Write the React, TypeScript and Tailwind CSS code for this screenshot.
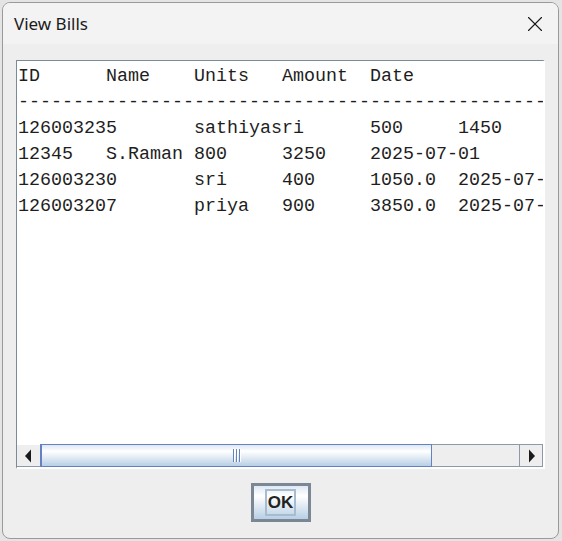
import { X } from "lucide-react";

const LINES = [
  "ID      Name    Units   Amount  Date",
  "-".repeat(90),
  "126003235       sathiyasri      500     1450",
  "12345   S.Raman 800     3250    2025-07-01",
  "126003230       sri     400     1050.0  2025-07-01",
  "126003207       priya   900     3850.0  2025-07-01",
];

const ocean = "bg-[linear-gradient(to_bottom,#dde8f3_0%,#ffffff_30%,#b8cfe5_100%)]";

function Arrow({ dir }: { dir: "left" | "right" }) {
  return (
    <svg width="7" height="14" viewBox="0 0 7 14">
      {dir === "left" ? (
        <polygon points="0,7 6,0.5 6,13.5" fill="#1a1a1a" />
      ) : (
        <polygon points="7,7 1,0.5 1,13.5" fill="#1a1a1a" />
      )}
    </svg>
  );
}

function HScrollBar() {
  return (
    <div className="flex h-[23px] bg-[#eeeeee]">
      <div className="flex w-[23px] items-center justify-center border-b border-[#8a9aab] border-t border-t-[#ffffff]">
        <Arrow dir="left" />
      </div>
      <div
        className={`flex w-[392px] items-center justify-center gap-[1px] border-y border-l-2 border-r border-[#6382bf] ${ocean}`}
      >
        <div className="flex h-[13px] gap-[1px]">
          {[0, 1, 2].map((i) => (
            <div key={i} className="flex">
              <div className="w-[1px] bg-[#6382bf]" />
              <div className="w-[1px] bg-white" />
            </div>
          ))}
        </div>
      </div>
      <div className="flex-1 border-y border-[#8a9aab]" />
      <div className="flex w-[24px] items-center justify-center border border-[#8a9aab] bg-[#eeeeee]">
        <Arrow dir="right" />
      </div>
    </div>
  );
}

export default function App() {
  return (
    <div className="h-[541px] w-[562px] bg-[#e4e4e4] pl-[2px] pr-[3px] pt-[2px] pb-[2px]">
      <div className="flex h-full flex-col overflow-hidden rounded-[8px] border border-[#9a9a9a] bg-[#eeeeee]">
        <div className="flex h-[41px] items-center justify-between bg-[#f3f3f3] pl-[11px] pr-[10px]">
          <span
            className="text-[17px] text-[#1b1b1b]"
            style={{ fontFamily: '"Noto Sans", sans-serif' }}
          >
            View Bills
          </span>
          <X size={26} strokeWidth={1} color="#1a1a1a" />
        </div>

        <div className="flex flex-1 flex-col px-[13px] pt-[16px]">
          <div className="flex h-[409px] flex-col border-l border-t border-[#7a8a99] border-r-2 border-b-2 border-r-white border-b-white">
            <div className="flex-1 overflow-hidden bg-white pl-[1px] pt-[3px]">
              <pre
                className="text-[18.33px] leading-[26px] text-[#1e1e1e]"
                style={{ fontFamily: '"Liberation Mono", monospace' }}
              >
                {LINES.join("\n")}
              </pre>
            </div>
            <HScrollBar />
          </div>

          <div className="mt-[14px] flex justify-center">
            <button
              className={`flex h-[39px] w-[60px] items-center justify-center border-[3px] border-[#7b8794] ${ocean}`}
            >
              <span
                className="flex h-[27px] w-[31px] items-center justify-center border-2 border-[#a8bccf] text-[17px] font-bold text-[#222]"
                style={{ fontFamily: '"Liberation Sans", Arial, sans-serif' }}
              >
                OK
              </span>
            </button>
          </div>
        </div>
      </div>
    </div>
  );
}
